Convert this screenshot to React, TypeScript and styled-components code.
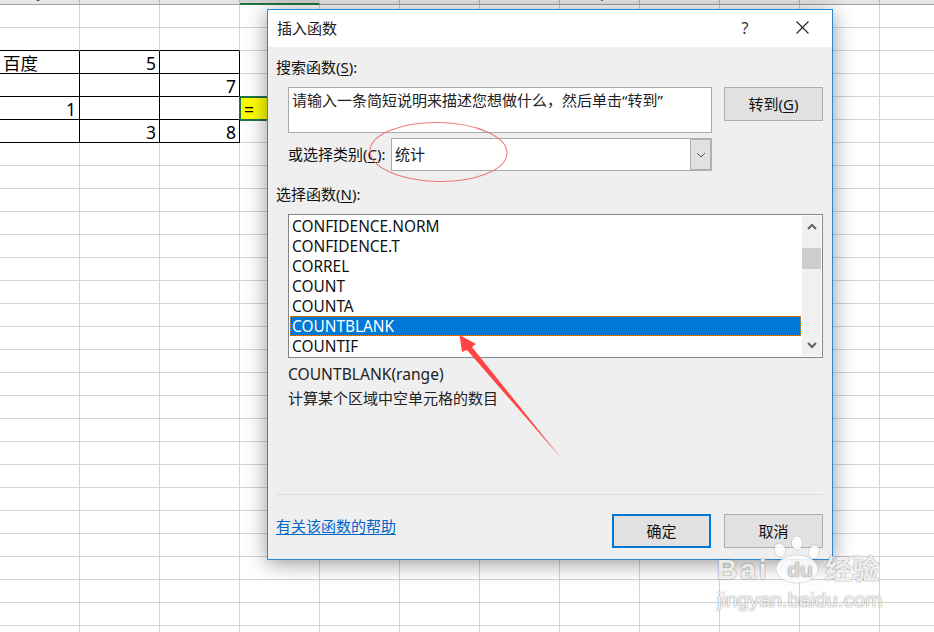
import styled, { createGlobalStyle } from "styled-components";

const GlobalStyle = createGlobalStyle`
  html, body {
    margin: 0;
    padding: 0;
    background: #fff;
    overflow: hidden;
  }
  * { box-sizing: border-box; }
`;

const FONT = `"Noto Sans", "Noto Sans CJK SC", sans-serif`;

const Page = styled.div`
  position: relative;
  width: 934px;
  height: 632px;
  overflow: hidden;
  font-family: ${FONT};
  color: #000;
`;

/* sheet behind the dialog */
const HeaderRow = styled.div`
  display: flex;
  height: 5px;
  overflow: hidden;
`;
const HeaderCell = styled.div<{ $active?: boolean }>`
  flex: 0 0 80px;
  height: 5px;
  background: ${(p) => (p.$active ? "#d2d2d2" : "#e6e6e6")};
  border-right: 1px solid ${(p) => (p.$active ? "#d2d2d2" : "#b4b4b4")};
  border-bottom: ${(p) => (p.$active ? "2px solid #217346" : "1px solid #a0a0a0")};
  display: flex;
  justify-content: center;
  align-items: flex-end;
  font-size: 12px;
  line-height: 12px;
  color: #444;
`;
const HeaderLetter = styled.span`
  margin-bottom: 3px;
`;
const SheetRow = styled.div`
  display: flex;
  height: 23px;
`;
const Cell = styled.div<{ $right?: boolean; $bottom?: boolean; $align?: string; $selected?: boolean }>`
  flex: 0 0 80px;
  height: 23px;
  border-right: 1px solid ${(p) => (p.$right ? "#000" : "#d4d4d4")};
  border-bottom: 1px solid ${(p) => (p.$bottom ? "#000" : "#d4d4d4")};
  background: ${(p) => (p.$selected ? "#ffff00" : "transparent")};
  outline: ${(p) => (p.$selected ? "2px solid #217346" : "none")};
  outline-offset: -1px;
  padding: 0 ${(p) => (p.$selected ? "4px" : "3px")};
  text-align: ${(p) => p.$align ?? "right"};
  font-size: 17.5px;
  line-height: 25px;
`;

/* dialog */
const Dialog = styled.div`
  position: absolute;
  left: 267px;
  top: 9px;
  width: 566px;
  height: 551px;
  border: 1px solid #2b88d8;
  background: #efefef;
  box-shadow: 0 3px 20px rgba(0, 0, 0, 0.42);
  display: flex;
  flex-direction: column;
  font-size: 15px;
  line-height: 18px;
`;
const TitleBar = styled.div`
  height: 37px;
  flex: none;
  background: #fff;
  display: flex;
  align-items: center;
  padding: 0 0 2px 9px;
  color: #1a1a1a;
`;
const Title = styled.div`
  flex: 1;
`;
const HelpMark = styled.div`
  width: 20px;
  margin-right: 41px;
  text-align: center;
  font-size: 16px;
  color: #333;
`;
const CloseIcon = styled.svg`
  width: 13px;
  height: 13px;
  margin-right: 23px;
  stroke: #222;
  stroke-width: 1.1;
  fill: none;
`;
const Body = styled.div`
  flex: 1;
  display: flex;
  flex-direction: column;
  padding: 0 9px 0 8px;
`;
const FieldLabel = styled.div<{ $top: number }>`
  height: 20px;
  margin-top: ${(p) => p.$top}px;
  color: #111;
`;
const Key = styled.span`
  text-decoration: underline;
  text-underline-offset: 2px;
  text-decoration-thickness: 1px;
`;
const SearchRow = styled.div`
  display: flex;
  align-items: flex-start;
  gap: 12px;
  margin-top: 9px;
  padding-left: 12px;
`;
const SearchBox = styled.div`
  width: 424px;
  height: 46px;
  background: #fff;
  border: 1px solid #a9a9a9;
  padding: 3px 3px;
  color: #222;
`;
const Button = styled.button<{ $primary?: boolean }>`
  width: 99px;
  height: 34px;
  padding: 0 0 2px;
  background: #e1e1e1;
  border: ${(p) => (p.$primary ? "2px solid #0078d7" : "1px solid #adadad")};
  font-family: ${FONT};
  font-size: 15px;
  color: #111;
`;
const CategoryRow = styled.div`
  display: flex;
  align-items: center;
  margin-top: 5px;
  padding-left: 12px;
`;
const CategoryLabel = styled.div`
  width: 103px;
  padding-bottom: 2px;
  color: #111;
`;
const Select = styled.div`
  width: 321px;
  height: 33px;
  background: #fff;
  border: 1px solid #aaa;
  display: flex;
  align-items: center;
  justify-content: space-between;
  padding-left: 3px;
  color: #222;
`;
const SelectValue = styled.span`
  margin-bottom: 2px;
`;
const SelectArrow = styled.div`
  width: 22px;
  height: 33px;
  margin-right: -1px;
  background: #e1e1e1;
  border: 2px solid #b0b0b0;
  border-left-width: 1px;
  display: flex;
  align-items: center;
  justify-content: center;
`;
const Chevron = styled.svg<{ $weight: number; $color: string }>`
  fill: none;
  stroke: ${(p) => p.$color};
  stroke-width: ${(p) => p.$weight};
`;
const ListBox = styled.div`
  margin: 9px 0 0 12px;
  width: 535px;
  height: 144px;
  background: #fff;
  border: 1px solid #82858c;
  padding: 1px;
  display: flex;
`;
const FunctionList = styled.div`
  flex: 1;
  padding-right: 1px;
`;
const FunctionItem = styled.div<{ $selected?: boolean }>`
  height: 20px;
  line-height: 19px;
  padding-left: 1px;
  font-size: 15.4px;
  border: 1px ${(p) => (p.$selected ? "dotted #e8871e" : "solid transparent")};
  background: ${(p) => (p.$selected ? "#0078d7" : "transparent")};
  color: ${(p) => (p.$selected ? "#fff" : "#111")};
`;
const ScrollBar = styled.div`
  width: 19px;
  background: #f0f0f0;
  display: flex;
  flex-direction: column;
`;
const ScrollButton = styled.div`
  height: 21px;
  flex: none;
  display: flex;
  align-items: center;
  justify-content: center;
`;
const ScrollTrack = styled.div`
  flex: 1;
  padding-top: 11px;
`;
const ScrollThumb = styled.div`
  height: 21px;
  background: #cdcdcd;
`;
const InfoLine = styled.div<{ $top: number; $latin?: boolean }>`
  margin-top: ${(p) => p.$top}px;
  padding-left: 12px;
  height: 20px;
  font-size: ${(p) => (p.$latin ? "15.6px" : "15px")};
  line-height: ${(p) => (p.$latin ? "20px" : "18px")};
  color: #222;
`;
const Separator = styled.div`
  margin-top: 85px;
  height: 1px;
  background: #dcdcdc;
`;
const Footer = styled.div`
  height: 53px;
  display: flex;
  align-items: flex-end;
  gap: 13px;
`;
const HelpLink = styled.a`
  flex: 1;
  margin-bottom: 13px;
  color: #0066cc;
  text-decoration: underline;
  text-underline-offset: 2px;
  text-decoration-thickness: 1px;
`;

/* annotations */
const Annotation = styled.svg`
  position: absolute;
  left: 0;
  top: 0;
  width: 934px;
  height: 632px;
  pointer-events: none;
`;
const Watermark = styled.div`
  position: absolute;
  left: 717px;
  top: 552px;
  width: 172px;
  color: rgba(255, 255, 255, 0.9);
  text-shadow: 0 0 1.5px rgba(0, 0, 0, 0.6);
  font-family: "Liberation Sans", "Noto Sans CJK SC", sans-serif;
`;
const MarkRow = styled.div`
  position: relative;
  display: flex;
  align-items: center;
  height: 36px;
`;
const MarkBai = styled.span`
  width: 58px;
  font-size: 28px;
  font-weight: 700;
  letter-spacing: 3px;
  line-height: 36px;
`;
const MarkDu = styled.span`
  width: 50px;
  text-align: center;
  font-size: 21px;
  font-weight: 700;
  line-height: 36px;
  color: rgba(225, 225, 225, 0.95);
`;
const MarkCn = styled.span`
  font-size: 27px;
  font-weight: 700;
  line-height: 36px;
  white-space: nowrap;
`;
const MarkSite = styled.div`
  font-size: 20.5px;
  line-height: 24px;
  white-space: nowrap;
`;
const Paw = styled.svg`
  position: absolute;
  left: 55px;
  top: -16px;
  width: 50px;
  height: 52px;
  fill: rgba(255, 255, 255, 0.85);
  stroke: rgba(0, 0, 0, 0.12);
`;

const COLUMNS = ["J", "K", "L", "M", "N", "O", "P", "Q", "R", "S", "T", "U"];
const ROW_COUNT = 28;

// table content by [row, column]
const CELLS: Record<string, { text: string; align?: string; selected?: boolean }> = {
  "2-0": { text: "百度", align: "left" },
  "2-1": { text: "5" },
  "3-2": { text: "7" },
  "4-0": { text: "1" },
  "4-3": { text: "=", align: "left", selected: true },
  "5-1": { text: "3" },
  "5-2": { text: "8" },
};

const FUNCTIONS = ["CONFIDENCE.NORM", "CONFIDENCE.T", "CORREL", "COUNT", "COUNTA", "COUNTBLANK", "COUNTIF"];

function Sheet() {
  return (
    <div>
      <HeaderRow>
        {COLUMNS.map((c, i) => (
          <HeaderCell key={c} $active={i === 3}>
            <HeaderLetter>{c}</HeaderLetter>
          </HeaderCell>
        ))}
      </HeaderRow>
      {Array.from({ length: ROW_COUNT }, (_, r) => (
        <SheetRow key={r}>
          {COLUMNS.map((c, i) => {
            const cell = CELLS[`${r}-${i}`];
            const inTable = i < 3 && r >= 2 && r <= 5;
            return (
              <Cell
                key={c}
                $right={inTable}
                $bottom={i < 3 && r >= 1 && r <= 5}
                $align={cell?.align}
                $selected={cell?.selected}
              >
                {cell?.text}
              </Cell>
            );
          })}
        </SheetRow>
      ))}
    </div>
  );
}

export default function App() {
  return (
    <Page>
      <GlobalStyle />
      <Sheet />
      <Dialog>
        <TitleBar>
          <Title>插入函数</Title>
          <HelpMark>?</HelpMark>
          <CloseIcon viewBox="0 0 13 13">
            <path d="M0.5 0.5L12.5 12.5M12.5 0.5L0.5 12.5" />
          </CloseIcon>
        </TitleBar>
        <Body>
          <FieldLabel $top={11}>
            搜索函数(<Key>S</Key>):
          </FieldLabel>
          <SearchRow>
            <SearchBox>请输入一条简短说明来描述您想做什么，然后单击“转到”</SearchBox>
            <Button>
              转到(<Key>G</Key>)
            </Button>
          </SearchRow>
          <CategoryRow>
            <CategoryLabel>
              或选择类别(<Key>C</Key>):
            </CategoryLabel>
            <Select>
              <SelectValue>统计</SelectValue>
              <SelectArrow>
                <Chevron $weight={1} $color="#555" width="10" height="6" viewBox="0 0 10 6">
                  <path d="M1 1L5 5L9 1" />
                </Chevron>
              </SelectArrow>
            </Select>
          </CategoryRow>
          <FieldLabel $top={14}>
            选择函数(<Key>N</Key>):
          </FieldLabel>
          <ListBox>
            <FunctionList>
              {FUNCTIONS.map((f) => (
                <FunctionItem key={f} $selected={f === "COUNTBLANK"}>
                  {f}
                </FunctionItem>
              ))}
            </FunctionList>
            <ScrollBar>
              <ScrollButton>
                <Chevron $weight={2} $color="#606060" width="10" height="7" viewBox="0 0 10 7">
                  <path d="M1 6L5 2L9 6" />
                </Chevron>
              </ScrollButton>
              <ScrollTrack>
                <ScrollThumb />
              </ScrollTrack>
              <ScrollButton>
                <Chevron $weight={2} $color="#606060" width="10" height="7" viewBox="0 0 10 7">
                  <path d="M1 1L5 5L9 1" />
                </Chevron>
              </ScrollButton>
            </ScrollBar>
          </ListBox>
          <InfoLine $top={6} $latin>
            COUNTBLANK(range)
          </InfoLine>
          <InfoLine $top={5}>计算某个区域中空单元格的数目</InfoLine>
          <Separator />
          <Footer>
            <HelpLink>有关该函数的帮助</HelpLink>
            <Button $primary>确定</Button>
            <Button>取消</Button>
          </Footer>
        </Body>
      </Dialog>
      <Annotation viewBox="0 0 934 632">
        <ellipse cx="438.5" cy="152" rx="68.5" ry="29.5" fill="none" stroke="#ee7777" strokeWidth="1" transform="rotate(1 438.5 152)" />
        <polygon points="459.5,335 476,344 472,347 561,458 467,350 462,352" fill="#ff4444" />
      </Annotation>
      <Watermark>
        <Paw viewBox="0 0 50 52">
          <ellipse cx="8" cy="14" rx="5.5" ry="7" transform="rotate(-15 8 14)" />
          <ellipse cx="25" cy="7" rx="5.5" ry="7" />
          <ellipse cx="42" cy="16" rx="5.5" ry="7" transform="rotate(15 42 16)" />
          <ellipse cx="25" cy="33" rx="21" ry="14" />
        </Paw>
        <MarkRow>
          <MarkBai>Bai</MarkBai>
          <MarkDu>du</MarkDu>
          <MarkCn>经验</MarkCn>
        </MarkRow>
        <MarkSite>jingyan.baidu.com</MarkSite>
      </Watermark>
    </Page>
  );
}
